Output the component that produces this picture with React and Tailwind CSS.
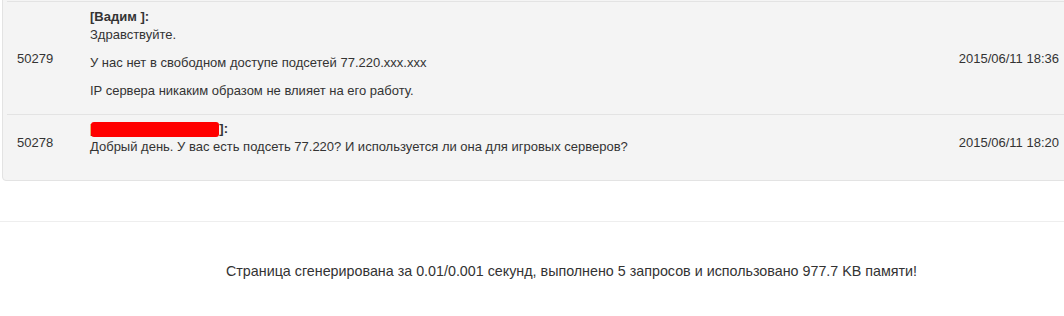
export default function App() {
  return (
    <div className="w-[1064px] h-[316px] overflow-hidden bg-white text-[13px] leading-[18px] text-[#333]" style={{ fontFamily: '"Liberation Sans", Arial, sans-serif' }}>
      <div className="ml-[2px] mr-[-6px] mt-[-4px] pt-[4px] pb-[9px] bg-[#f4f4f4] border border-[#e3e3e3] rounded-b-[4px]">
        <div className="border-t border-[#e3e3e3] ml-[4px] flex items-center pt-[6px] pb-[4px]">
          <div className="w-[83px] pl-[10px]">50279</div>
          <div className="flex-1">
            <div className="font-bold">[Вадим ]:</div>
            <p>Здравствуйте.</p>
            <p className="mt-[10px]">У нас нет в свободном доступе подсетей 77.220.xxx.xxx</p>
            <p className="mt-[10px] mb-[10px]">IP сервера никаким образом не влияет на его работу.</p>
          </div>
          <div className="w-[120px] pr-[10px] text-right">2015/06/11 18:36</div>
        </div>
        <div className="border-t border-[#e3e3e3] ml-[4px] flex items-center pt-[5px] pb-[5px]">
          <div className="w-[83px] pl-[10px]">50278</div>
          <div className="flex-1">
            <div className="font-bold flex items-center">
              <span>[</span>
              <span className="inline-block w-[128px] h-[15px] bg-[#ff0000] rounded-[3px] -ml-[3px]" />
              <span>]:</span>
            </div>
            <p className="mb-[10px]">Добрый день. У вас есть подсеть 77.220? И используется ли она для игровых серверов?</p>
          </div>
          <div className="w-[120px] pr-[10px] text-right">2015/06/11 18:20</div>
        </div>
      </div>
      <div className="mt-[40px] border-t border-[#eeeeee]" />
      <div className="pt-[39px] pl-[226px] text-[14.3px] leading-[20px]">
        Страница сгенерирована за 0.01/0.001 секунд, выполнено 5 запросов и использовано 977.7 KB памяти!
      </div>
    </div>
  );
}
